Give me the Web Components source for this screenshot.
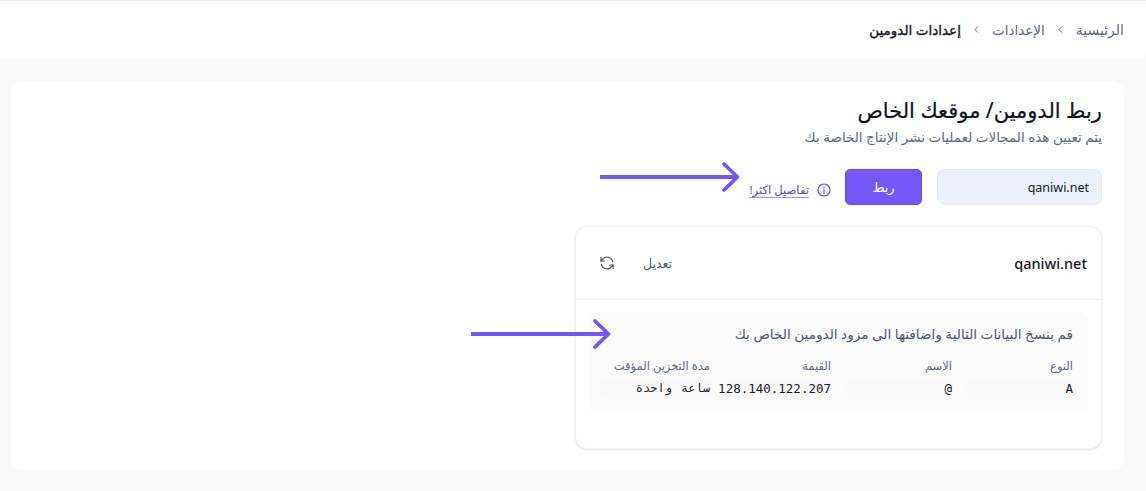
<!DOCTYPE html>
<html lang="ar" dir="rtl">
<head>
<meta charset="utf-8">
<title>إعدادات الدومين</title>
<style>
    html, body { margin: 0; height: 100%; }
    body {
        background: #f9f9fa;
        font-family: "Noto Sans", "DejaVu Sans", sans-serif;
        color: #111827;
        overflow: hidden;
    }
</style>
</head>
<body>
<bread-bar>
    <span>الرئيسية</span>
    <span>الإعدادات</span>
    <b>إعدادات الدومين</b>
</bread-bar>
<domain-page>
    <dns-card domain="qaniwi.net"></dns-card>
</domain-page>
<script>
class BreadBar extends HTMLElement {
    constructor() {
        super();
        const root = this.attachShadow({ mode: 'open' });
        root.innerHTML = `
        <style>
            :host {
                display: flex;
                align-items: center;
                height: 58px;
                box-sizing: content-box;
                border-top: 1px solid #e9e9ec;
                background: #fff;
                border-bottom-right-radius: 8px;
                padding-right: 22px;
                font-size: 14px;
                color: #5b6785;
            }
            nav { display: flex; align-items: center; gap: 12px; margin-top: -1px; }
            ::slotted(span:nth-of-type(2)) { font-size: 13.5px; }
            ::slotted(b) { color: #111827; font-size: 13.5px; font-weight: 400; -webkit-text-stroke: .35px #111827; }
            svg { display: block; width: 7px; height: 9px; }
        </style>
        <nav id="n"></nav>`;
        const nav = root.getElementById('n');
        [...this.children].forEach((c, i) => {
            const name = 's' + i;
            c.slot = name;
            if (i) {
                const sep = document.createElement('span');
                sep.innerHTML = '<svg viewBox="0 0 7 9"><path d="M5 1.5 2 4.5 5 7.5" fill="none" stroke="#5b6785" stroke-width="1"/></svg>';
                nav.appendChild(sep);
            }
            const s = document.createElement('slot');
            s.name = name;
            nav.appendChild(s);
        });
    }
}
customElements.define('bread-bar', BreadBar);

class ArrowMark extends HTMLElement {
    constructor() {
        super();
        this.attachShadow({ mode: 'open' }).innerHTML = `
        <style>
            :host { display: block; position: absolute; width: 142px; height: 32px; pointer-events: none; }
            svg { display: block; }
        </style>
        <svg width="142" height="32" viewBox="0 0 142 32" fill="none" stroke="#7557f7" stroke-width="3.8">
            <path d="M1 16H138" stroke-linecap="butt"/>
            <path d="M125 3 138.5 16 125 29" stroke-linecap="round" stroke-linejoin="round"/>
        </svg>`;
    }
}
customElements.define('arrow-mark', ArrowMark);

class DomainPage extends HTMLElement {
    constructor() {
        super();
        this.attachShadow({ mode: 'open' }).innerHTML = `
        <style>
            :host {
                display: block;
                position: relative;
                box-sizing: border-box;
                margin: 22px 22px 0 11px;
                height: 389px;
                padding: 15px 22px 0;
                background: #fff;
                border-radius: 12px;
            }
            h1 { margin: 0; font-size: 21px; line-height: 29px; font-weight: 400; color: #0f1222; -webkit-text-stroke: .2px #0f1222; }
            p { margin: 3px 0 0; font-size: 13.5px; line-height: 18px; color: #5b6785; }
            .row { display: flex; align-items: center; margin-top: 23px; height: 36px; }
            .input {
                box-sizing: border-box; width: 165px; height: 36px; padding: 0 12px;
                display: flex; align-items: center;
                background: #ebf0fd; border: 1px solid #e3e8f6; border-radius: 8px;
                font-size: 12.5px; color: #111827;
            }
            button {
                box-sizing: border-box; width: 77px; height: 36px; margin-right: 15px;
                background: #7557f7; border: 1px solid #6a4cf0; border-radius: 5px;
                font: inherit; font-size: 13px; color: #fff; padding: 0;
            }
            .more {
                display: flex; align-items: center; gap: 8px; margin: 6px 14px 0 0;
                font-size: 11.6px; color: #5b43d6;
            }
            .more a { color: inherit; text-decoration: none; border-bottom: 1px solid #a08ff5; line-height: 14px; }
            .more svg { display: block; }
            .slot { display: block; margin-top: 21px; width: 527px; }
            arrow-mark.a1 { left: 588px; top: 80px; }
            arrow-mark.a2 { left: 459px; top: 237px; }
        </style>
        <h1>ربط الدومين/ موقعك الخاص</h1>
        <p>يتم تعيين هذه المجالات لعمليات نشر الإنتاج الخاصة بك</p>
        <div class="row">
            <div class="input" dir="ltr" style="justify-content:flex-end">qaniwi.net</div>
            <button>ربط</button>
            <div class="more">
                <svg width="14" height="14" viewBox="0 0 14 14" fill="none" stroke="#5b43d6" stroke-width="1.1">
                    <circle cx="7" cy="7" r="6"/>
                    <path d="M7 6.4V10" stroke-linecap="round"/>
                    <path d="M7 4.1v.3" stroke-linecap="round" stroke-width="1.4"/>
                </svg>
                <a>تفاصيل اكثر!</a>
            </div>
        </div>
        <div class="slot"><slot></slot></div>
        <arrow-mark class="a1"></arrow-mark>
        <arrow-mark class="a2"></arrow-mark>`;
    }
}
customElements.define('domain-page', DomainPage);

class DnsCard extends HTMLElement {
    constructor() {
        super();
        const domain = this.getAttribute('domain');
        const cols = [
            ['النوع', 'A'],
            ['الاسم', '@'],
            ['القيمة', '128.140.122.207'],
            ['مدة التخزين المؤقت', 'ساعة واحدة']
        ];
        const heads = cols.map(c => `<div class="th">${c[0]}</div>`).join('');
        const cells = cols.map(c => `<div class="td">${c[1]}</div>`).join('');
        this.attachShadow({ mode: 'open' }).innerHTML = `
        <style>
            :host {
                display: block; box-sizing: border-box; height: 223px;
                background: #fff; border: 1px solid #f1f1f3; border-radius: 12px;
                box-shadow: 0 1px 2px rgba(16,24,40,.14);
            }
            header {
                display: flex; align-items: center; height: 72px; padding: 0 14px;
                border-bottom: 1px solid #eeeef1;
            }
            .name { font-size: 14.5px; font-weight: 500; color: #111827; }
            .tools { margin-right: auto; display: flex; align-items: center; gap: 28px; font-size: 12.5px; color: #4b5672; }
            .tools svg { display: block; margin-left: 9px; }
            .panel {
                margin: 12px 13px 0; height: 99px; box-sizing: border-box;
                padding: 12px 15px 0; background: #fbfbfc; border-radius: 6px;
            }
            .panel p { margin: 0; font-size: 13.6px; line-height: 20px; color: #4b5672; }
            .grid { display: grid; grid-template-columns: 121px 121px 121px 109px; margin-top: 15px; }
            .th { font-size: 11.5px; line-height: 14px; color: #5b6785; padding-bottom: 6px; }
            .td {
                font-family: "DejaVu Sans Mono", "Liberation Mono", monospace;
                font-size: 12.5px; line-height: 19px; color: #1a1a2a;
                background: #f9f9fa; border-radius: 5px; margin-left: 14px; white-space: nowrap;
            }
            .td:last-child { margin-left: 0; font-size: 12px; word-spacing: 2px; }
        </style>
        <header>
            <div class="name">${domain}</div>
            <div class="tools">
                <span>تعديل</span>
                <svg width="16" height="16" viewBox="0 0 16 16" fill="none" stroke="#4b5672" stroke-width="1.2" stroke-linecap="round" stroke-linejoin="round">
                    <path d="M13.6 6.6A5.8 5.8 0 0 0 3.2 4.6L2 6"/>
                    <path d="M2 2.6V6h3.4"/>
                    <path d="M2.4 9.4a5.8 5.8 0 0 0 10.4 2L14 10"/>
                    <path d="M14 13.4V10h-3.4"/>
                </svg>
            </div>
        </header>
        <div class="panel">
            <p>قم بنسخ البيانات التالية واضافتها الى مزود الدومين الخاص بك</p>
            <div class="grid">${heads}${cells}</div>
        </div>`;
    }
}
customElements.define('dns-card', DnsCard);
</script>
</body>
</html>
